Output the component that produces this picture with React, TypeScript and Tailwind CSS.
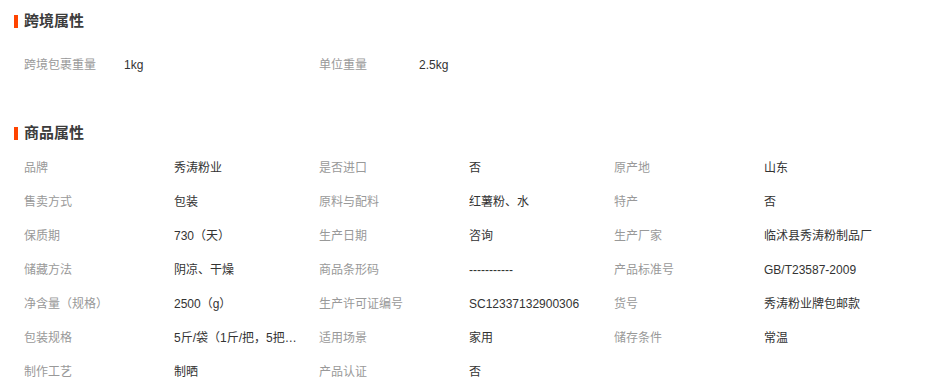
const cross = [
  ["跨境包裹重量", "1kg"],
  ["单位重量", "2.5kg"],
];

const attrs = [
  ["品牌", "秀涛粉业"],
  ["是否进口", "否"],
  ["原产地", "山东"],
  ["售卖方式", "包装"],
  ["原料与配料", "红薯粉、水"],
  ["特产", "否"],
  ["保质期", "730（天）"],
  ["生产日期", "咨询"],
  ["生产厂家", "临沭县秀涛粉制品厂"],
  ["储藏方法", "阴凉、干燥"],
  ["商品条形码", "-----------"],
  ["产品标准号", "GB/T23587-2009"],
  ["净含量（规格）", "2500（g）"],
  ["生产许可证编号", "SC12337132900306"],
  ["货号", "秀涛粉业牌包邮款"],
  ["包装规格", "5斤/袋（1斤/把，5把/袋）"],
  ["适用场景", "家用"],
  ["储存条件", "常温"],
  ["制作工艺", "制晒"],
  ["产品认证", "否"],
];

function Title({ text }: { text: string }) {
  return (
    <div className="flex items-center h-5">
      <div className="w-1 h-[13px] bg-[#ff4400]" />
      <h2 className="ml-1.5 text-[15px] font-bold text-[#3c3c3c] leading-5">{text}</h2>
    </div>
  );
}

export default function App() {
  return (
    <div
      className="w-[933px] h-[387px] bg-white pt-[11px] pl-[14px] overflow-hidden"
      style={{ fontFamily: '"Liberation Sans", "Noto Sans CJK SC", sans-serif' }}
    >
      <Title text="跨境属性" />
      <div className="mt-[17px] pl-[10px] grid grid-cols-[295px_295px_295px]">
        {cross.map(([k, v]) => (
          <div key={k} className="flex items-center h-[34px] text-xs">
            <span className="w-[100px] text-[#999]">{k}</span>
            <span className="text-[#333]">{v}</span>
          </div>
        ))}
      </div>

      <div className="mt-[41px]">
        <Title text="商品属性" />
      </div>
      <div className="mt-[8px] pl-[10px] grid grid-cols-[295px_295px_295px]">
        {attrs.map(([k, v]) => (
          <div key={k} className="flex items-center h-[34px] text-xs">
            <span className="w-[150px] shrink-0 text-[#999]">{k}</span>
            <span className="w-[125px] truncate text-[#333]">{v}</span>
          </div>
        ))}
      </div>
    </div>
  );
}
